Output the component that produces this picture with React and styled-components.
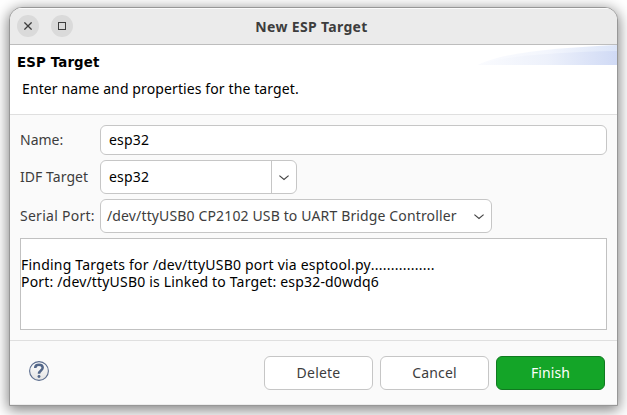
import React from "react";
import styled, { createGlobalStyle } from "styled-components";

const Global = createGlobalStyle`
  * { box-sizing: border-box; }
  body {
    margin: 0;
    background: #fff;
    overflow: hidden;
    font-family: "Noto Sans", "Open Sans", sans-serif;
    font-size: 14px;
    color: #3d3d3d;
  }
  button, input, textarea { font: inherit; color: inherit; margin: 0; }
`;

const Desktop = styled.div`
  height: 415px;
  padding: 7px 9px 9px;
  overflow: hidden;
`;

const Window = styled.main`
  width: 609px;
  height: 399px;
  display: flex;
  flex-direction: column;
  background: #fafafa;
  border: 1px solid #979797;
  border-radius: 13px 13px 0 0;
  box-shadow: 0 3px 14px 1px rgba(0, 0, 0, 0.5);
  overflow: hidden;
`;

const TitleBar = styled.header`
  height: 37px;
  flex: none;
  display: grid;
  grid-template-columns: 100px 1fr 104px;
  align-items: center;
  background: #ebebeb;
  border-bottom: 1px solid #bdbdbd;
  box-shadow: inset 0 1px #fbfbfb;
`;

const WindowControls = styled.div`
  display: flex;
  gap: 12px;
  padding-left: 7px;
`;

const ControlButton = styled.button`
  width: 22px;
  height: 22px;
  padding: 0;
  border: 0;
  border-radius: 50%;
  background: #dadada;
  display: grid;
  place-items: center;
`;

const Title = styled.h1`
  margin: 2px 0 0;
  text-align: center;
  font-size: 14px;
  line-height: 20px;
  font-weight: 700;
  white-space: nowrap;
`;

const Text = styled.span`
  white-space: pre;
  letter-spacing: ${(p) => p.$spacing || 0}px;
`;

const Banner = styled.section`
  height: 70px;
  flex: none;
  display: flex;
  justify-content: space-between;
  background: #fff;
  border-bottom: 1px solid #dfdfdf;
  color: #000;
`;

const BannerText = styled.div`
  padding: 8px 0 0 7px;
`;

const BannerTitle = styled.h2`
  margin: 0;
  font: 700 13.33px/20px "DejaVu Sans", sans-serif;
`;

const BannerMessage = styled.p`
  margin: 6px 0 0 5px;
  line-height: 20px;
`;

const Form = styled.section`
  height: 225px;
  flex: none;
  padding: 10px 10px 0;
`;

const Row = styled.div`
  display: flex;
  align-items: center;
  height: ${(p) => p.$height}px;
  margin-bottom: ${(p) => p.$gap}px;
`;

const Label = styled.label`
  width: 80px;
  flex: none;
  line-height: 20px;
`;

const Field = styled.div`
  width: ${(p) => p.$width}px;
  height: 100%;
  display: flex;
  align-items: center;
  justify-content: space-between;
  padding-left: ${(p) => p.$inset}px;
  background: #fff;
  border: 1px solid #c6c6c6;
  border-radius: 6px;
  line-height: 20px;
  color: ${(p) => p.$color || "#000"};
`;

const Arrow = styled.span`
  width: 25px;
  height: 100%;
  display: grid;
  place-items: center;
  border-left: ${(p) => (p.$divided ? "1px solid #c6c6c6" : "0")};
`;

const Log = styled.div`
  height: 92px;
  padding: 17px 0 0;
  background: #fff;
  border: 1px solid #c1c1c1;
  color: #000;
  line-height: 17px;
`;

const LogLine = styled.div`
  height: 17px;
`;

const Footer = styled.footer`
  flex: 1;
  border-top: 1px solid #dfdfdf;
  padding: 15px 12px 0 18px;
  display: flex;
  justify-content: space-between;
  align-items: flex-start;
  box-shadow: inset 0 -1px #ececec;
`;

const HelpButton = styled.button`
  width: 22px;
  height: 22px;
  margin-top: 4px;
  padding: 0;
  border: 0;
  background: none;
  display: block;
`;

const Buttons = styled.div`
  display: flex;
  gap: 7px;
`;

const Button = styled.button`
  width: 109px;
  height: 34px;
  padding: 0;
  line-height: 20px;
  border-radius: 6px;
  border: 1px solid ${(p) => (p.$primary ? "#107a20" : "#c6c6c6")};
  background: ${(p) => (p.$primary ? "#14a528" : "#fff")};
  color: ${(p) => (p.$primary ? "#fff" : "#3d3d3d")};
`;

const Chevron = () => (
  <svg width="12" height="8" viewBox="0 0 12 8" fill="none" stroke="#454545" strokeWidth="1.2">
    <path d="M1.4 2.6 L6 6.5 L10.6 2.6" />
  </svg>
);

const Swoosh = () => (
  <svg width="139" height="20" viewBox="0 0 139 20">
    <defs>
      <linearGradient id="outer">
        <stop offset="0" stopColor="#fafbfe" />
        <stop offset="0.5" stopColor="#f3f6fd" />
        <stop offset="1" stopColor="#dce5f8" />
      </linearGradient>
      <linearGradient id="inner">
        <stop offset="0" stopColor="#fafbfe" />
        <stop offset="0.5" stopColor="#edf1fb" />
        <stop offset="1" stopColor="#d0daf5" />
      </linearGradient>
    </defs>
    <path d="M0 20 C25 7 78 3 139 0 V20 Z" fill="url(#outer)" />
    <path d="M0 20 C25 11 78 7 139 6 V20 Z" fill="url(#inner)" />
  </svg>
);

const HelpIcon = () => (
  <svg width="22" height="22" viewBox="0 0 22 22" fill="none">
    <defs>
      <linearGradient id="help" x2="0" y2="1">
        <stop stopColor="#fff" />
        <stop offset="1" stopColor="#e3e3e3" />
      </linearGradient>
    </defs>
    <circle cx="11" cy="11" r="9.4" fill="url(#help)" stroke="#5b6d8e" strokeWidth="1.1" />
    <path d="M7.2 8 C7.2 3.7 14.7 3.9 14.7 7.8 C14.7 10.4 11 10.5 11 13.7" stroke="#536789" strokeWidth="2.5" />
    <circle cx="11" cy="16.5" r="1.45" fill="#536789" />
  </svg>
);

export default function App() {
  return (
    <Desktop>
      <Global />
      <Window>
        <TitleBar>
          <WindowControls>
            <ControlButton aria-label="Close">
              <svg width="8" height="8" viewBox="0 0 8 8" stroke="#3d3d3d" strokeWidth="1.3">
                <path d="M.4 .4 L7.6 7.6 M7.6 .4 L.4 7.6" />
              </svg>
            </ControlButton>
            <ControlButton aria-label="Maximize">
              <svg width="8" height="8" viewBox="0 0 8 8" fill="none" stroke="#3d3d3d">
                <rect x=".5" y=".5" width="7" height="7" />
              </svg>
            </ControlButton>
          </WindowControls>
          <Title><Text $spacing={0.33}>New ESP Target</Text></Title>
        </TitleBar>
        <Banner>
          <BannerText>
            <BannerTitle><Text $spacing={0.15}>ESP Target</Text></BannerTitle>
            <BannerMessage><Text $spacing={0.11}>Enter name and properties for the target.</Text></BannerMessage>
          </BannerText>
          <Swoosh />
        </Banner>
        <Form>
          <Row $height={30} $gap={5}>
            <Label><Text>Name:</Text></Label>
            <Field $width={507} $inset={8}><Text $spacing={0.2}>esp32</Text></Field>
          </Row>
          <Row $height={34} $gap={5}>
            <Label><Text $spacing={0.05}>IDF Target</Text></Label>
            <Field $width={197} $inset={8}>
              <Text $spacing={0.2}>esp32</Text>
              <Arrow $divided><Chevron /></Arrow>
            </Field>
          </Row>
          <Row $height={34} $gap={5}>
            <Label><Text $spacing={0.27}>Serial Port:</Text></Label>
            <Field $width={392} $inset={6} $color="#3d3d3d">
              <Text $spacing={0.14}>/dev/ttyUSB0 CP2102 USB to UART Bridge Controller</Text>
              <Arrow><Chevron /></Arrow>
            </Field>
          </Row>
          <Log>
            <LogLine>
              <Text $spacing={0.21}>Finding Targets for /dev/ttyUSB0 port via esptool.py</Text>
              <Text $spacing={0.25}>................</Text>
            </LogLine>
            <LogLine><Text $spacing={0.175}>Port: /dev/ttyUSB0 is Linked to Target: esp32-d0wdq6</Text></LogLine>
          </Log>
        </Form>
        <Footer>
          <HelpButton aria-label="Help"><HelpIcon /></HelpButton>
          <Buttons>
            <Button><Text $spacing={0.2}>Delete</Text></Button>
            <Button><Text $spacing={0.15}>Cancel</Text></Button>
            <Button $primary><Text $spacing={0.1}>Finish</Text></Button>
          </Buttons>
        </Footer>
      </Window>
    </Desktop>
  );
}
